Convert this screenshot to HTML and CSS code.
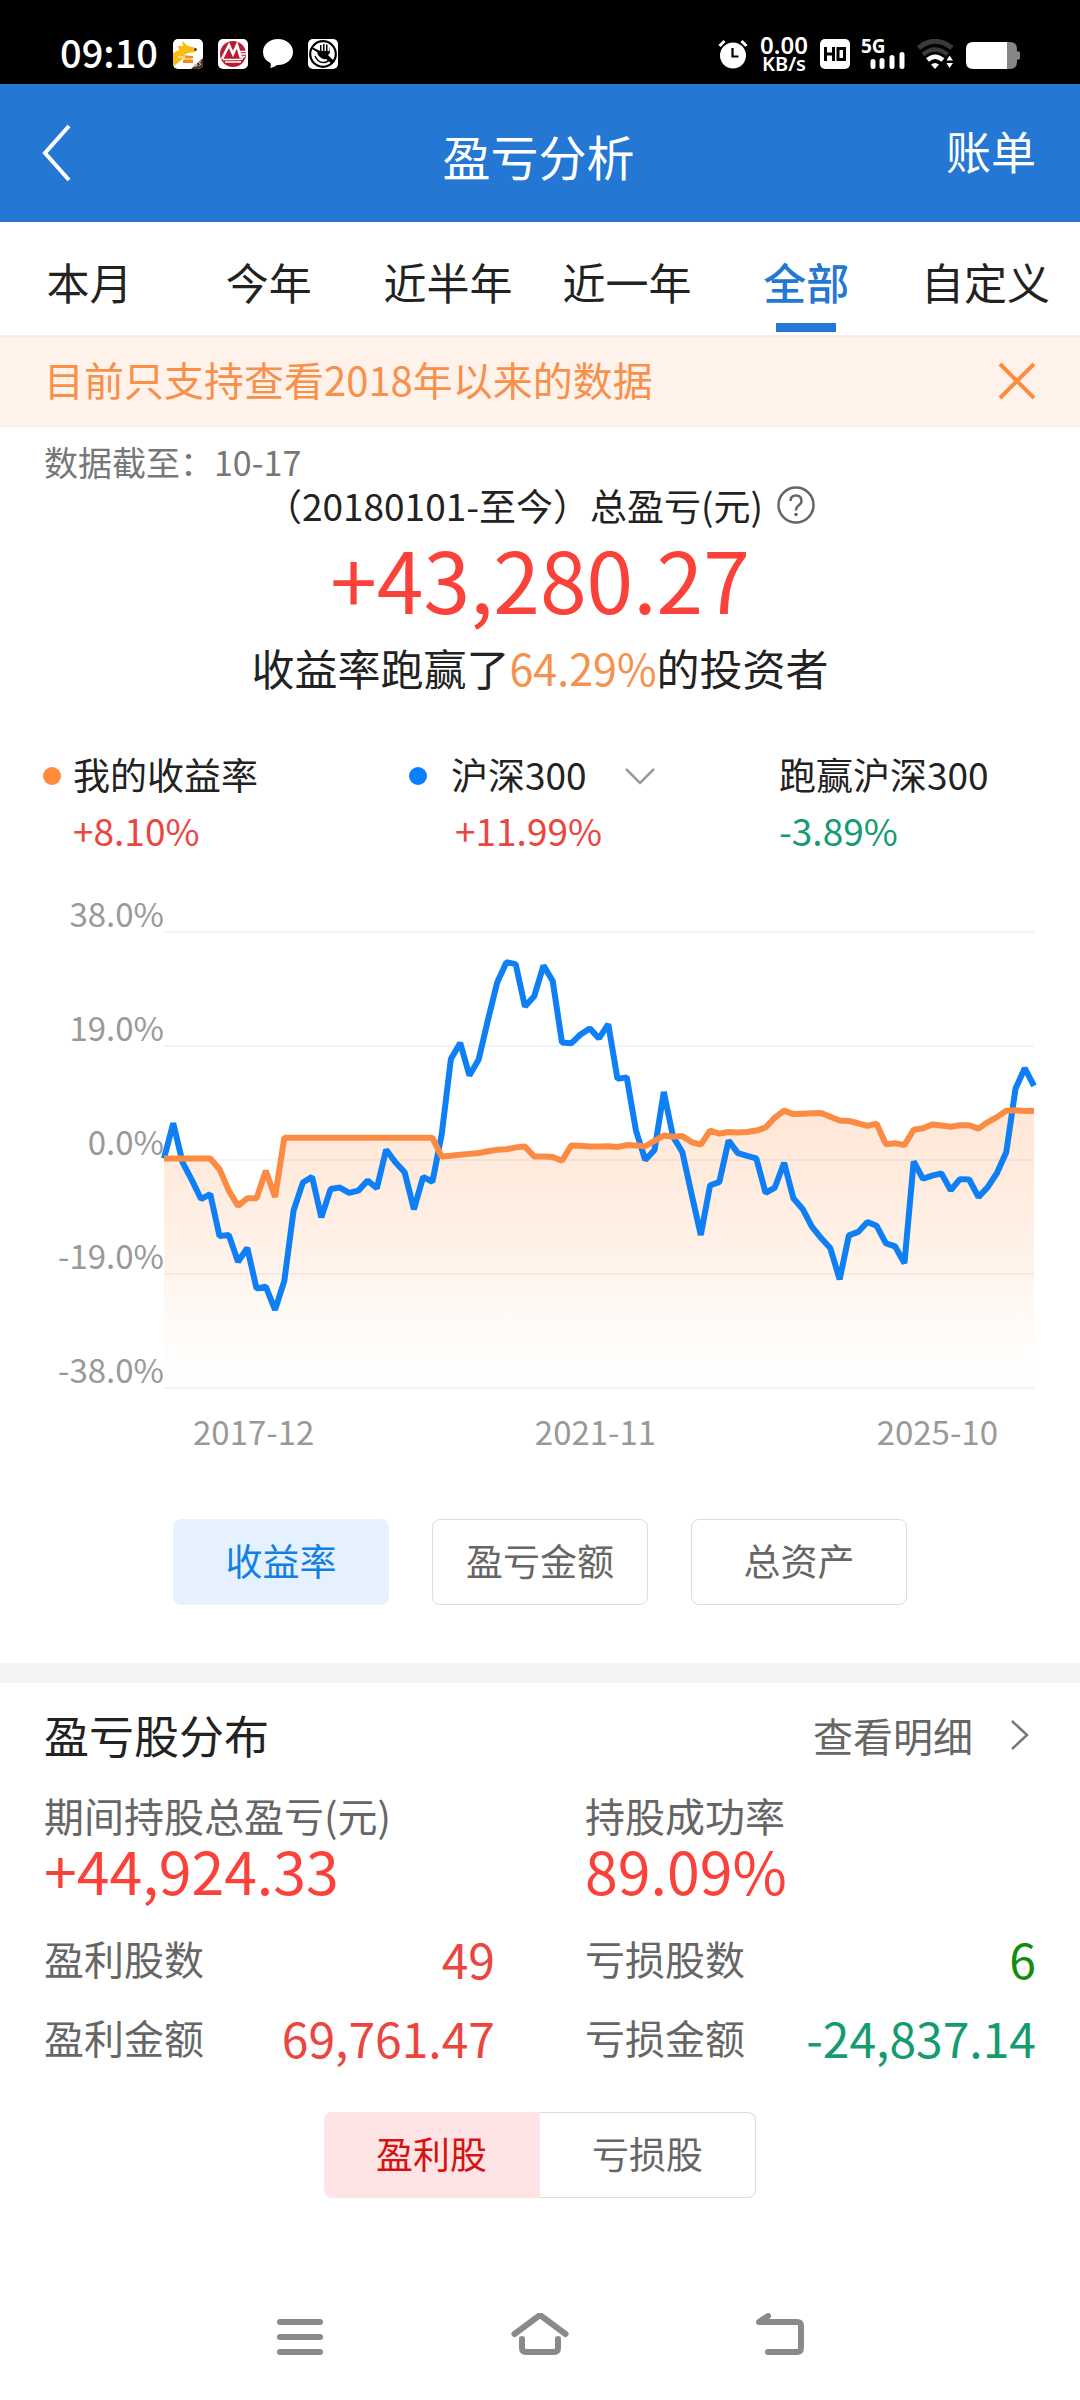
FILE: index.html
```html
<!DOCTYPE html>
<html lang="zh-CN">
<head>
<meta charset="utf-8">
<meta name="viewport" content="width=device-width, initial-scale=1">
<title>盈亏分析</title>
<link rel="stylesheet" href="styles.css">
</head>
<body>
<div class="status">
  <div class="status-left">
    <span class="clock">09:10</span>
    <svg class="app-icon" viewBox="0 0 30 30" aria-hidden="true">
      <rect width="30" height="30" rx="5" fill="#fff"/>
      <path d="M0 14 L6 11 L5 7 L10 7 L9 2 L15 7 L20 8 L24 10 L22 13 L15 14 L11 16 L20 17 V19 L11 19 L6 23 L1 27 L0 25Z" fill="#f9bc13"/>
      <path d="M10 17H20V24H10Z" fill="#f58a1b"/>
      <path d="M5 18 L12 18 L10 20 L20 20" fill="none" stroke="#fff" stroke-width="1"/>
      <circle cx="22.500" cy="10.500" r="1.300" fill="#33251c"/>
      <path d="M30 19 V25 Q30 30 25 30 H18Z" fill="#4e3529"/>
      <path d="M22 28 V25 H24 V27 H22 M26 27 L28 25 L26 24 L28 22" fill="none" stroke="#d8c9bb" stroke-width="0.900"/>
    </svg>
    <svg class="app-icon" viewBox="0 0 30 30" aria-hidden="true">
      <rect width="30" height="30" rx="5" fill="#fff"/>
      <circle cx="15" cy="15" r="13" fill="#b81c35"/>
      <path d="M4 20 L11 6 L15 15 L19 6 L23 19" fill="none" stroke="#fff" stroke-width="2.600"/>
      <path d="M10 20 L11.500 13 L13.500 20Z M17 20 L18.500 13 L20 20Z" fill="#b81c35"/>
      <path d="M5 20.500 H22 Q25 20.500 25 17.500 H27 M7 23 H23 M22 12.500 H28 M23 15 H28" fill="none" stroke="#fff" stroke-width="1.300"/>
    </svg>
    <svg class="app-icon" viewBox="0 0 30 30" aria-hidden="true">
      <path d="M15 0C23.500 0 30 5.600 30 13S23.500 26 15 26H14Q11 28.500 7 29Q8.500 27 7.500 24Q0 20.500 0 13C0 5.600 6.500 0 15 0Z" fill="#fff"/>
    </svg>
    <svg class="app-icon" viewBox="0 0 30 30" aria-hidden="true">
      <rect width="30" height="30" rx="5" fill="#fff"/>
      <circle cx="15" cy="15" r="12.800" fill="none" stroke="#000" stroke-width="2.200"/>
      <path d="M4 8 L12 12 V6 H13.500 V12 H15 V5 H16.500 V12 H18 V5.500 H19.500 V12 H21 V7 L22 14 L20 16 L26 22 L24 25 L18 20 Q14 21 10 16 L9 13 L4 10Z" fill="#000"/>
      <path d="M7 17 Q10 24 16 23.500 Q20 23 22 20" fill="none" stroke="#000" stroke-width="1.500"/>
    </svg>
  </div>
  <div class="status-right">
    <svg class="app-icon" viewBox="0 0 30 30" aria-hidden="true">
      <circle cx="15" cy="16.500" r="13" fill="#fff"/>
      <path d="M1.500 7 L6.500 2 M23.500 2 L28.500 7" stroke="#fff" stroke-width="3"/>
      <path d="M14.500 9 V17.500 H20.500" fill="none" stroke="#000" stroke-width="2.200"/>
    </svg>
    <span class="speed"><span class="speed-value">0.00</span><span class="speed-unit">KB/s</span></span>
    <svg class="app-icon" viewBox="0 0 30 30" role="img" aria-label="HD">
      <rect width="30" height="30" rx="5" fill="#fff"/>
      <path d="M5.500 8 V22 M13.500 8 V22 M5.500 15 H13.500 M18 9.500 H24.500 V20.500 H18Z" fill="none" stroke="#000" stroke-width="3"/>
    </svg>
    <svg class="signal" viewBox="0 0 45 30" aria-hidden="true">
      <text class="signal-type" x="0" y="14">5G</text>
      <path d="M12 22.500V27.500 M21 21.500V27.500 M31 18.500V27.500 M41 15.500V27.500" fill="none" stroke="#fff" stroke-width="5" stroke-linecap="round"/>
    </svg>
    <svg class="wifi" viewBox="0 0 38 30" aria-hidden="true">
      <path d="M1.500 9 Q18 -4.500 35 9" fill="none" stroke="#3a3a3a" stroke-width="5"/>
      <path d="M6 15.500 Q18 5.500 30.500 15.500" fill="none" stroke="#3a3a3a" stroke-width="4.500"/>
      <path d="M10.500 21 Q18 14.500 26 21" fill="none" stroke="#fff" stroke-width="4.500"/>
      <path d="M14 25.500 Q18 22.500 22 25.500 L18 30Z M29.500 21.500 L32.500 16.500 L36 21.500Z M29.500 24 L32.500 29 L36 24Z" fill="#fff"/>
    </svg>
    <svg class="battery" viewBox="0 0 54 30" aria-hidden="true">
      <path d="M40 3 H44 Q51 3 51 10 V12 L54 13 V20 L51 21 V23 Q51 30 44 30 H40Z" fill="#858585"/>
      <path d="M7 3 H41 V30 H7 Q0 30 0 23 V10 Q0 3 7 3Z" fill="#fff"/>
    </svg>
  </div>
</div>

<header class="header">
  <button class="back" type="button" aria-label="返回">
    <svg viewBox="0 0 32 60" width="32" height="60" aria-hidden="true"><path d="M28 3 L4 30 L28 57" fill="none" stroke="#fff" stroke-width="4"/></svg>
  </button>
  <h1 class="title">盈亏分析</h1>
  <a class="bill" href="#bill">账单</a>
</header>

<nav class="tabs" aria-label="时间范围">
  <button class="tab" type="button">本月</button>
  <button class="tab" type="button">今年</button>
  <button class="tab" type="button">近半年</button>
  <button class="tab" type="button">近一年</button>
  <button class="tab tab-active" type="button" aria-current="true">全部</button>
  <button class="tab" type="button">自定义</button>
</nav>

<div class="notice">
  <p class="notice-text">目前只支持查看2018年以来的数据</p>
  <button class="notice-close" type="button" aria-label="关闭">
    <svg viewBox="0 0 38 38" width="38" height="38" aria-hidden="true"><path d="M2 2 L36 36 M36 2 L2 36" stroke="#ff8b3d" stroke-width="4"/></svg>
  </button>
</div>

<main class="main">
  <section class="summary">
    <p class="as-of">数据截至：10-17</p>
    <div class="period">
      <span>（20180101-至今）总盈亏(元)</span>
      <button class="help" type="button" aria-label="说明">
        <svg viewBox="0 0 38 38" width="38" height="38" aria-hidden="true">
          <circle cx="19" cy="19" r="17.500" fill="none" stroke="#666" stroke-width="2.500"/>
          <path d="M13.500 15 Q13.500 9.500 19 9.500 T24.500 15 Q24.500 17.500 21.500 19.500 Q19 21.500 19 24.500" fill="none" stroke="#666" stroke-width="2.500"/>
          <circle cx="19" cy="28.500" r="1.800" fill="#666"/>
        </svg>
      </button>
    </div>
    <p class="total">+43,280.27</p>
    <p class="rank">收益率跑赢了<span class="rank-value">64.29%</span>的投资者</p>
  </section>

  <section class="legend">
    <div class="series series-mine">
      <p class="series-name"><span class="dot dot-mine"></span>我的收益率</p>
      <p class="series-value up">+8.10%</p>
    </div>
    <div class="series series-index">
      <button class="series-name series-pick" type="button"><span class="dot dot-index"></span>沪深300
        <svg class="caret" viewBox="0 0 30 18" aria-hidden="true"><path d="M1 2 L15 16 L29 2" fill="none" stroke="#999" stroke-width="2.500"/></svg>
      </button>
      <p class="series-value up">+11.99%</p>
    </div>
    <div class="series">
      <p class="series-name">跑赢沪深300</p>
      <p class="series-value down">-3.89%</p>
    </div>
  </section>

  <section class="chart" aria-label="收益率走势">
    <div class="axis-y">
      <span>38.0%</span><span>19.0%</span><span>0.0%</span><span>-19.0%</span><span>-38.0%</span>
    </div>
    <!-- x: months since 2017-12 -->
    <svg class="plot" viewBox="0 160 94 1192" preserveAspectRatio="none" role="img" aria-label="我的收益率与沪深300走势">
      <defs>
        <linearGradient id="fill" x1="0" y1="627" x2="0" y2="1352" gradientUnits="userSpaceOnUse">
          <stop offset="0" stop-color="#ff8b3d" stop-opacity="0.210"/>
          <stop offset="0.500" stop-color="#ff8b3d" stop-opacity="0.120"/>
          <stop offset="0.750" stop-color="#ff8b3d" stop-opacity="0.040"/>
          <stop offset="1" stop-color="#ff8b3d" stop-opacity="0"/>
        </linearGradient>
      </defs>
      <path class="grid" d="M0 160H94 M0 458H94 M0 756H94 M0 1054H94 M0 1352H94"/>
      <polygon fill="url(#fill)" points="0,1352 0,752 5,752 6,780 7,836 8,876 9,856 10,856 11,784 12,853 13,698 29,698 30,747 31,745 32,742 33,740 34,738 35,733 36,729 37,728 38,723 39,721 40,747 41,747 42,748 43,758 44,718 45,719 46,721 47,721 48,720 49,722 50,717 51,718 52,720 53,706 54,692 55,695 56,693 57,709 58,716 59,679 60,687 61,683 62,684 63,683 64,679 65,671 66,645 67,627 68,636 69,635 70,634 71,633 72,643 73,653 74,654 75,660 76,667 77,661 78,715 79,712 80,717 81,677 82,673 83,663 84,666 85,669 86,665 87,665 88,674 89,657 90,644 91,627 92,626 93,628 94,627 94,1352"/>
      <polyline class="line line-index" points="0,752 1,660 2,762 3,808 4,858 5,845 6,955 7,952 8,1022 9,986 10,1092 11,1087 12,1148 13,1072 14,888 15,815 16,800 17,906 18,832 19,828 20,842 21,836 22,810 23,830 24,729 25,762 26,788 27,885 28,800 29,813 30,690 31,492 32,450 33,535 34,493 35,390 36,292 37,239 38,244 39,355 40,328 41,248 42,288 43,449 44,451 45,428 46,412 47,438 48,401 49,544 50,540 51,680 52,756 53,730 54,578 55,695 56,735 57,845 58,952 59,822 60,814 61,705 62,738 63,745 64,752 65,842 66,828 67,763 68,856 69,884 70,930 71,960 72,987 73,1068 74,953 75,944 76,918 77,928 78,974 79,982 80,1026 81,760 82,805 83,797 84,791 85,835 86,806 87,807 88,853 89,827 90,790 91,736 92,570 93,516 94,562"/>
      <polyline class="line line-mine" points="0,752 5,752 6,780 7,836 8,876 9,856 10,856 11,784 12,853 13,698 29,698 30,747 31,745 32,742 33,740 34,738 35,733 36,729 37,728 38,723 39,721 40,747 41,747 42,748 43,758 44,718 45,719 46,721 47,721 48,720 49,722 50,717 51,718 52,720 53,706 54,692 55,695 56,693 57,709 58,716 59,679 60,687 61,683 62,684 63,683 64,679 65,671 66,645 67,627 68,636 69,635 70,634 71,633 72,643 73,653 74,654 75,660 76,667 77,661 78,715 79,712 80,717 81,677 82,673 83,663 84,666 85,669 86,665 87,665 88,674 89,657 90,644 91,627 92,626 93,628 94,627"/>
    </svg>
    <div class="axis-x"><span>2017-12</span><span>2021-11</span><span>2025-10</span></div>
  </section>

  <div class="modes">
    <button class="mode mode-active" type="button" aria-pressed="true">收益率</button>
    <button class="mode" type="button" aria-pressed="false">盈亏金额</button>
    <button class="mode" type="button" aria-pressed="false">总资产</button>
  </div>

  <section class="stocks">
    <div class="stocks-head">
      <h2 class="stocks-title">盈亏股分布</h2>
      <a class="details" href="#details">查看明细
        <svg viewBox="0 0 18 32" width="18" height="32" aria-hidden="true"><path d="M1 2 L16 16 L1 30" fill="none" stroke="#777" stroke-width="2.500"/></svg>
      </a>
    </div>
    <div class="stocks-grid">
      <dl class="column">
        <div class="lead"><dt>期间持股总盈亏(元)</dt><dd>+44,924.33</dd></div>
        <div class="row"><dt>盈利股数</dt><dd class="up">49</dd></div>
        <div class="row"><dt>盈利金额</dt><dd class="up">69,761.47</dd></div>
      </dl>
      <dl class="column">
        <div class="lead"><dt>持股成功率</dt><dd>89.09%</dd></div>
        <div class="row"><dt>亏损股数</dt><dd class="loss-count">6</dd></div>
        <div class="row"><dt>亏损金额</dt><dd class="down">-24,837.14</dd></div>
      </dl>
    </div>
    <div class="switch">
      <button class="switch-item switch-active" type="button" aria-pressed="true">盈利股</button>
      <button class="switch-item" type="button" aria-pressed="false">亏损股</button>
    </div>
  </section>
</main>

<nav class="system" aria-label="系统导航">
  <button class="system-key" type="button" aria-label="最近任务">
    <svg viewBox="0 0 60 48" width="60" height="48" aria-hidden="true"><path d="M10 9H50 M10 24H50 M10 39H50"/></svg>
  </button>
  <button class="system-key" type="button" aria-label="主屏幕">
    <svg viewBox="0 0 60 48" width="60" height="48" aria-hidden="true"><path d="M4.500 21 L30 2 L55.500 21 M12 26 V35 Q12 39 16 39 H44 Q48 39 48 35 V26"/></svg>
  </button>
  <button class="system-key" type="button" aria-label="返回上一页">
    <svg viewBox="0 0 60 48" width="60" height="48" aria-hidden="true"><path d="M18 39 H47 Q51 39 51 35 V13 Q51 9 47 9 H9 L18 3"/></svg>
  </button>
</nav>
</body>
</html>
```
FILE: styles.css
```css
* { box-sizing: border-box; }

body {
  display: flex;
  flex-direction: column;
  min-height: 100vh;
  margin: 0;
  background: #fff;
  color: #222;
  font-family: "Noto Sans CJK SC", "Noto Sans", sans-serif;
  font-size: 37px;
}

h1, h2, p, dl, dd { margin: 0; font-weight: 400; }

button {
  padding: 0;
  border: 0;
  background: none;
  color: inherit;
  font: inherit;
}

a { color: inherit; text-decoration: none; }

svg { display: block; }

.up { color: #ea463f; }
.down { color: #159b72; }

/* status bar */
.status {
  display: flex;
  justify-content: space-between;
  height: 84px;
  padding: 24px 60px 0;
  background: #000;
  color: #fff;
}

.status-left, .status-right {
  display: flex;
  align-items: center;
  height: 60px;
}

.status-left { gap: 15px; }
.status-right { gap: 11px; }

.app-icon { width: 30px; height: 30px; }

.clock {
  padding-bottom: 4px;
  font-size: 38px;
  font-weight: 500;
  line-height: 54px;
}

.speed {
  display: flex;
  flex-direction: column;
  align-items: center;
  width: 50px;
  font-family: "Noto Sans", sans-serif;
  font-weight: 600;
}

.speed-value { font-size: 24px; line-height: 20px; }
.speed-unit { font-size: 20px; line-height: 18px; }

.signal { width: 45px; height: 30px; overflow: visible; }
.signal-type {
  fill: #fff;
  font-family: "Noto Sans", sans-serif;
  font-size: 19px;
  font-weight: 700;
}
.wifi { width: 38px; height: 30px; }
.battery { width: 54px; height: 30px; }

/* header */
.header {
  display: grid;
  grid-template-columns: 1fr auto 1fr;
  align-items: center;
  height: 138px;
  padding: 0 44px 0 41px;
  background: #2577d4;
  color: #fff;
}

.back { justify-self: start; }

.title {
  padding-top: 4px;
  font-size: 48px;
  line-height: 72px;
}

.bill {
  justify-self: end;
  padding-bottom: 4px;
  font-size: 45px;
  line-height: 66px;
}

/* range tabs */
.tabs {
  display: grid;
  grid-template-columns: repeat(6, 1fr);
  padding-right: 5px;
}

.tab {
  display: flex;
  flex-direction: column;
  align-items: center;
  height: 113px;
  padding-top: 29px;
  font-size: 43px;
  line-height: 60px;
}

.tab-active { color: #2577d4; font-weight: 500; }

.tab-active::after {
  width: 60px;
  height: 9px;
  margin-top: 12px;
  background: #2577d4;
  content: "";
}

.notice {
  display: flex;
  align-items: center;
  justify-content: space-between;
  height: 92px;
  padding: 0 44px;
  border-top: 2px solid #f3eeec;
  border-bottom: 2px solid #f4f2f1;
  background: #fff2ea;
  color: #f7914a;
}

.notice-text {
  padding-bottom: 4px;
  font-size: 40px;
  line-height: 60px;
}

.main { flex: 1; }

/* summary */
.summary {
  padding: 16px 44px 0;
  text-align: center;
}

.as-of {
  color: #777;
  font-size: 34px;
  line-height: 38px;
  text-align: left;
}

.period {
  display: flex;
  align-items: center;
  justify-content: center;
  gap: 14px;
  line-height: 48px;
}

.total {
  color: #fa413a;
  font-size: 84px;
  line-height: 98px;
}

.rank { font-size: 43px; line-height: 80px; }
.rank-value { color: #f4934f; }

/* legend */
.legend {
  display: grid;
  grid-template-columns: 366px 370px 1fr;
  padding: 39px 43px 0;
  line-height: 56px;
}

.series-name {
  display: flex;
  align-items: center;
}

.dot {
  width: 18px;
  height: 18px;
  margin-top: 4px;
  margin-right: 12px;
  border-radius: 50%;
}

.dot-mine { background: #ff8b3d; }
.dot-index { margin-right: 24px; background: #0a7ffb; }

.caret {
  width: 30px;
  height: 18px;
  margin-top: 4px;
  margin-left: 38px;
}

.series-mine .series-value { padding-left: 30px; }
.series-index .series-value { padding-left: 46px; }

/* chart */
.chart {
  display: grid;
  grid-template-columns: 120px 1fr;
  margin-top: 36px;
  padding: 0 46px 0 44px;
  color: #999;
  font-size: 33px;
}

.axis-y {
  display: flex;
  flex-direction: column;
  justify-content: space-between;
  line-height: 38px;
  text-align: right;
}

.plot {
  width: 100%;
  height: 456px;
  margin-top: 38px;
  overflow: visible;
}

.grid, .line { fill: none; vector-effect: non-scaling-stroke; }
.grid { stroke: #e8e8e8; stroke-width: 1px; }
.line { stroke-width: 6px; stroke-linejoin: bevel; }
.line-index { stroke: #0f7ff5; }
.line-mine { stroke: #fb8b42; }

.axis-x {
  display: flex;
  grid-column: 2;
  justify-content: space-between;
  padding: 19px 36px 0 29px;
  line-height: 48px;
}

.modes {
  display: flex;
  justify-content: center;
  gap: 43px;
  padding: 64px 0 58px;
}

.mode {
  width: 216px;
  height: 86px;
  padding-bottom: 4px;
  border: 1px solid #ddd;
  border-radius: 8px;
  color: #666;
}

.mode-active {
  border-color: #e5f1ff;
  background: #e5f1ff;
  color: #147fe0;
}

/* profit and loss by stock */
.stocks {
  padding: 17px 44px 35px;
  border-top: 20px solid #f4f4f4;
}

.stocks-head {
  display: flex;
  align-items: center;
  justify-content: space-between;
  line-height: 70px;
}

.stocks-title { font-size: 45px; }

.details {
  display: flex;
  align-items: center;
  gap: 38px;
  padding-right: 7px;
  color: #666;
  font-size: 40px;
}

.stocks-grid {
  display: grid;
  grid-template-columns: 1fr 1fr;
  gap: 90px;
  margin-top: 19px;
  color: #666;
  font-size: 40px;
}

.lead { margin-bottom: 20px; line-height: 52px; }
.lead dd { color: #fa413a; font-size: 59px; line-height: 58px; }

.row {
  display: flex;
  align-items: center;
  justify-content: space-between;
  line-height: 79px;
}

.row dd { font-size: 48px; }
.loss-count { color: #118c11; }

.switch {
  display: flex;
  justify-content: center;
  margin-top: 35px;
}

.switch-item {
  width: 216px;
  height: 86px;
  padding-bottom: 4px;
  border: 1px solid #ddd;
  border-left: 0;
  border-radius: 0 8px 8px 0;
  color: #666;
}

.switch-active {
  border-color: #ffe4e5;
  border-radius: 8px 0 0 8px;
  background: #ffe4e5;
  color: #d8110f;
}

/* system keys */
.system {
  display: flex;
  justify-content: center;
  gap: 180px;
  padding: 39px 0;
}

.system path {
  fill: none;
  stroke: #8a8a8a;
  stroke-width: 6;
  stroke-linecap: round;
  stroke-linejoin: round;
}
```
